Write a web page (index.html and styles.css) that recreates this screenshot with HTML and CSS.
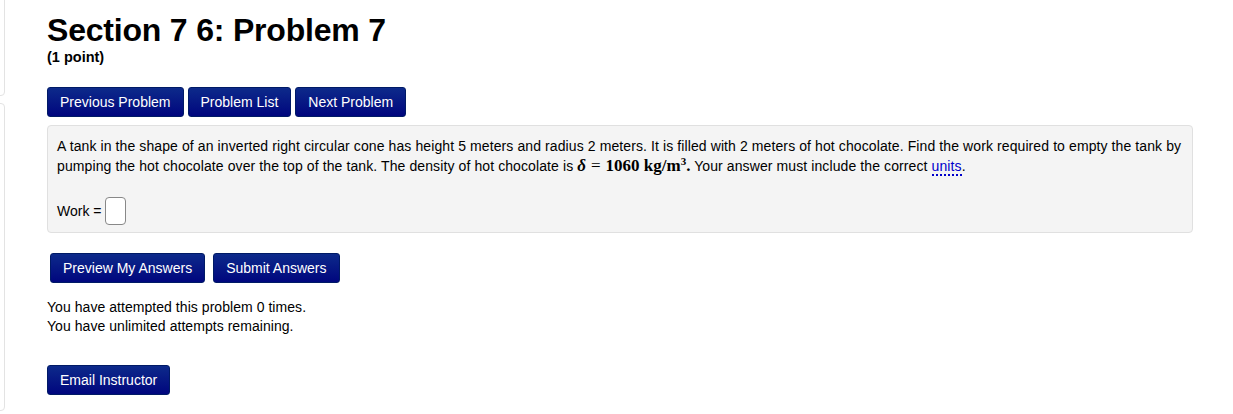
FILE: index.html
```html
<!DOCTYPE html>
<html>
<head>
<meta charset="utf-8">
<link rel="stylesheet" href="styles.css">
</head>
<body>
<div class="page">
  <div class="side">
    <div class="side-panel top"></div>
    <div class="side-panel bottom"></div>
  </div>
  <main class="main">
    <h1 class="title">Section 7 6: Problem 7</h1>
    <div class="points">(1 point)</div>
    <div class="nav">
      <button class="btn">Previous Problem</button>
      <button class="btn">Problem List</button>
      <button class="btn">Next Problem</button>
    </div>
    <div class="problem">
      <p class="text">A tank in the shape of an inverted right circular cone has height 5 meters and radius 2 meters. It is filled with 2 meters of hot chocolate. Find the work required to empty the tank by pumping the hot chocolate over the top of the tank. The density of hot chocolate is <span class="math"><i class="delta">δ</i><span class="eq">=</span><b>1060 kg/m<sup>3</sup>.</b></span> Your answer must include the correct <a class="units">units</a>.</p>
      <div class="answer">Work = <span class="input"></span></div>
    </div>
    <div class="submit">
      <button class="btn">Preview My Answers</button>
      <button class="btn">Submit Answers</button>
    </div>
    <div class="attempts">
      <div>You have attempted this problem 0 times.</div>
      <div>You have unlimited attempts remaining.</div>
    </div>
    <button class="btn">Email Instructor</button>
  </main>
</div>
</body>
</html>
```
FILE: styles.css
```css
html, body {
  margin: 0;
  padding: 0;
  background: #fff;
}
body {
  font-family: "Liberation Sans", Arial, sans-serif;
  font-size: 14px;
  color: #000;
}
.page {
  display: flex;
  height: 414px;
  overflow: hidden;
}
.side {
  width: 5px;
  flex: none;
  position: relative;
}
.side-panel {
  position: absolute;
  right: 0;
  width: 40px;
  border: 1px solid #e3e3e3;
  border-radius: 4px;
  background: #fff;
}
.side-panel.top {
  top: -10px;
  height: 104px;
}
.side-panel.bottom {
  top: 103px;
  height: 306px;
}
.main {
  margin-left: 42px;
  width: 1146px;
}
.title {
  font-size: 32px;
  font-weight: bold;
  margin: 12px 0 0 0;
  line-height: 36px;
  letter-spacing: -0.2px;
}
.points {
  font-weight: bold;
  font-size: 14.5px;
  line-height: 18px;
}
.nav {
  display: flex;
  gap: 4px;
  margin-top: 21px;
}
.btn {
  font-family: "Liberation Sans", Arial, sans-serif;
  font-size: 14px;
  color: #fff;
  background: linear-gradient(#0d2a8a, #00067e);
  border: 1px solid #001a66;
  border-radius: 3px;
  height: 30px;
  padding: 0 12px;
  line-height: 28px;
  cursor: pointer;
}
.problem {
  margin-top: 8px;
  background: #f4f4f4;
  border: 1px solid #e0e0e0;
  border-radius: 4px;
  padding: 10px 9px 7px 9px;
}
.text {
  margin: 0;
  line-height: 20px;
  letter-spacing: 0.1px;
}
.math {
  font-family: "Liberation Serif", "DejaVu Serif", serif;
  font-size: 17px;
  letter-spacing: 0;
}
.delta {
  font-weight: bold;
}
.eq {
  margin: 0 5px;
}
.math sup {
  font-size: 11px;
  line-height: 0;
  vertical-align: 6px;
}
.units {
  color: #0000cc;
  text-decoration: none;
  border-bottom: 2px dotted #0000cc;
}
.answer {
  margin-top: 21px;
  display: flex;
  align-items: center;
  gap: 4px;
}
.input {
  display: inline-block;
  width: 19px;
  height: 26px;
  background: #fff;
  border: 1px solid #888;
  border-radius: 4px;
}
.submit {
  display: flex;
  gap: 8px;
  margin: 20px 0 0 3px;
}
.attempts {
  margin-top: 15px;
  line-height: 19px;
  margin-bottom: 29px;
  letter-spacing: 0.05px;
}
```
